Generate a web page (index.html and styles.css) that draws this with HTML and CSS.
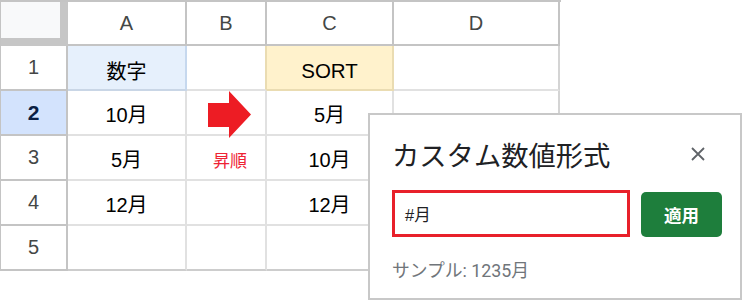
FILE: index.html
```html
<!DOCTYPE html>
<html lang="ja">
<head>
<meta charset="utf-8">
<link rel="stylesheet" href="styles.css">
</head>
<body>
<div class="sheet">
  <div class="grid">
    <div class="corner"></div>
    <div class="ch">A</div>
    <div class="ch">B</div>
    <div class="ch">C</div>
    <div class="ch">D</div>

    <div class="rh">1</div>
    <div class="c a1">数字</div>
    <div class="c b1"></div>
    <div class="c c1">SORT</div>
    <div class="c dcol"></div>

    <div class="rh sel">2</div>
    <div class="c">10月</div>
    <div class="c"></div>
    <div class="c">5月</div>
    <div class="c dcol"></div>

    <div class="rh">3</div>
    <div class="c">5月</div>
    <div class="c note">昇順</div>
    <div class="c">10月</div>
    <div class="c dcol"></div>

    <div class="rh">4</div>
    <div class="c">12月</div>
    <div class="c"></div>
    <div class="c">12月</div>
    <div class="c dcol"></div>

    <div class="rh lastrow">5</div>
    <div class="c lastrow"></div>
    <div class="c lastrow"></div>
    <div class="c lastrow"></div>
    <div class="c lastrow dcol"></div>
  </div>

  <svg class="arrow" width="44" height="48" viewBox="0 0 44 48">
    <polygon points="0,12 21,12 21,0 43,23.5 21,47 21,36 0,36" fill="#ed1c24"/>
  </svg>

  <div class="dialog">
    <div class="dlg-head">
      <div class="dlg-title">カスタム数値形式</div>
      <svg class="close" width="14" height="14" viewBox="0 0 14 14">
        <path d="M1 1 L13 13 M13 1 L1 13" stroke="#5f6368" stroke-width="1.8" fill="none"/>
      </svg>
    </div>
    <div class="dlg-row">
      <div class="fmt-input">#月</div>
      <div class="apply">適用</div>
    </div>
    <div class="sample">サンプル: 1235月</div>
  </div>
</div>
</body>
</html>
```

FILE: styles.css
```css
html, body {
  margin: 0;
  padding: 0;
  background: #ffffff;
}

.sheet {
  position: relative;
  width: 744px;
  height: 300px;
  overflow: hidden;
}

.grid {
  display: grid;
  grid-template-columns: 67px 119px 80px 127px 166px;
  grid-template-rows: 44px repeat(5, 45px);
  width: 560px;
  border-top: 2px solid #c4c4c4;
  border-left: 1px solid #c4c4c4;
  box-sizing: content-box;
}

.grid > div {
  box-sizing: border-box;
  display: flex;
  align-items: center;
  justify-content: center;
}

.corner {
  background: #f8f9fa;
  border-right: 8px solid #c6c6c6;
  border-bottom: 8px solid #c6c6c6;
}

.ch {
  border-right: 2px solid #c4c4c4;
  border-bottom: 2px solid #c4c4c4;
  color: #444746;
  font-family: "Liberation Sans", Arial, sans-serif;
  font-size: 20px;
}

.rh {
  border-right: 2px solid #c4c4c4;
  border-bottom: 2px solid #c4c4c4;
  color: #444746;
  font-family: "Liberation Sans", Arial, sans-serif;
  font-size: 20px;
}

.rh.sel {
  background: #d3e3fd;
  color: #0b1f44;
  font-weight: bold;
  font-size: 21px;
}

.c {
  border-right: 2px solid #e1e1e1;
  border-bottom: 2px solid #e1e1e1;
  color: #000000;
  font-family: "Liberation Sans", "Noto Sans CJK JP", sans-serif;
  font-size: 20px;
  padding-top: 2px;
}

.c.lastrow {
  border-bottom-color: #cdcdcd;
}

.c.dcol {
  border-right-color: #d4d4d4;
}

.c.a1 {
  background: #e6f0fc;
  border-right-color: #c6d8ee;
  border-bottom-color: #c9d6e6;
  padding-top: 6px;
}

.c.b1 {
  border-right-color: #eadcb2;
}

.c.c1 {
  background: #fff2cc;
  border-right-color: #eadcb2;
  border-bottom-color: #eadcb2;
  padding-top: 6px;
  font-size: 20.5px;
}

.c.note {
  color: #ee2233;
  font-family: "Noto Sans CJK JP", sans-serif;
  font-size: 17px;
  padding-top: 4px;
  padding-left: 8px;
}

.arrow {
  position: absolute;
  left: 208px;
  top: 91px;
}

.dialog {
  position: absolute;
  left: 368px;
  top: 113px;
  width: 374px;
  height: 187px;
  box-sizing: border-box;
  background: #ffffff;
  border: 2px solid #c8c8c8;
  padding: 26px 18px 0 22px;
  display: flex;
  flex-direction: column;
}

.dlg-head {
  display: flex;
  align-items: center;
  justify-content: space-between;
  height: 26px;
}

.dlg-title {
  font-family: "Noto Sans CJK JP", sans-serif;
  font-size: 27.3px;
  line-height: 26px;
  color: #202124;
}

.close {
  margin-right: 17px;
}

.dlg-row {
  display: flex;
  align-items: flex-end;
  gap: 11px;
  margin-top: 23px;
}

.fmt-input {
  box-sizing: border-box;
  width: 238px;
  height: 47px;
  border: 3px solid #e8202a;
  padding-left: 10px;
  display: flex;
  align-items: center;
  font-family: "Liberation Sans", "Noto Sans CJK JP", sans-serif;
  font-size: 16.5px;
  color: #202124;
}

.apply {
  box-sizing: border-box;
  width: 81px;
  height: 45px;
  border-radius: 5px;
  background: #1e7e3c;
  color: #ffffff;
  display: flex;
  align-items: center;
  justify-content: center;
  font-family: "Noto Sans CJK JP", sans-serif;
  font-size: 17.5px;
  font-weight: 700;
}

.sample {
  margin-top: 25px;
  font-family: Roboto, "Noto Sans CJK JP", sans-serif;
  font-size: 17.8px;
  line-height: 18px;
  color: #70757a;
}
```
